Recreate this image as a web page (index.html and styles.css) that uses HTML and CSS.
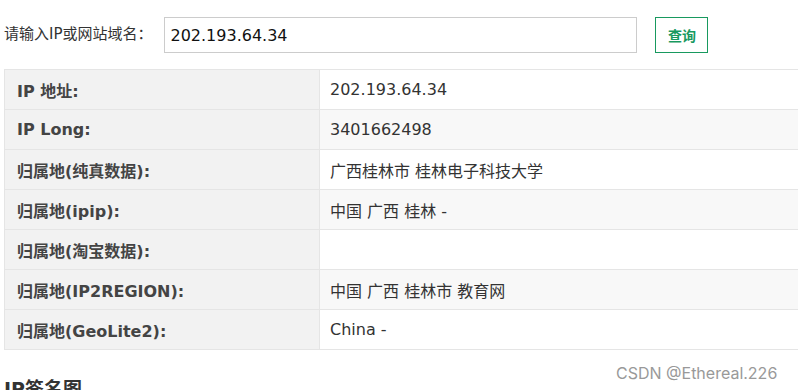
FILE: index.html
```html
<!DOCTYPE html>
<html>
  <head>
    <meta charset="utf-8" />
    <title>IP查询</title>
    <link rel="stylesheet" href="styles.css">
  </head>
  <body>
    <form class="query" onsubmit="return false">
      <label for="ip" class="query-label">请输入IP或网站域名：</label>
      <input id="ip" class="query-input" type="text" value="202.193.64.34" />
      <button class="query-btn" type="submit">查询</button>
    </form>

    <table class="info">
      <tr><th>IP 地址:</th><td>202.193.64.34</td></tr>
      <tr><th>IP Long:</th><td>3401662498</td></tr>
      <tr><th>归属地(纯真数据):</th><td>广西桂林市 桂林电子科技大学</td></tr>
      <tr><th>归属地(ipip):</th><td>中国 广西 桂林 -</td></tr>
      <tr><th>归属地(淘宝数据):</th><td></td></tr>
      <tr><th>归属地(IP2REGION):</th><td>中国 广西 桂林市 教育网</td></tr>
      <tr><th>归属地(GeoLite2):</th><td>China -</td></tr>
    </table>

    <h3 class="section-title">IP签名图</h3>

    <div class="watermark">CSDN @Ethereal.226</div>
  </body>
</html>
```

FILE: styles.css
```css
* {
    box-sizing: border-box;
}

body {
    margin: 0;
    padding: 17px 0 0 4px;
    font-family: "DejaVu Sans", "Noto Sans CJK SC", sans-serif;
    font-size: 16px;
    color: #333;
    background: #fff;
    overflow: hidden;
}

.query {
    display: flex;
    align-items: center;
    margin: 0;
}

.query-label {
    font-size: 15px;
    color: #333;
    margin-right: 12px;
    margin-top: -5px;
}

.query-input {
    width: 473px;
    height: 36px;
    padding: 0 5px;
    border: 1px solid #ccc;
    font-family: "DejaVu Sans", sans-serif;
    font-size: 16px;
    color: #111;
    outline: none;
}

.query-btn {
    width: 53px;
    height: 36px;
    margin-left: 18px;
    padding: 0;
    border: 1px solid #18995f;
    background: #fff;
    color: #18995f;
    font-family: "Noto Sans CJK SC", sans-serif;
    font-size: 14px;
    font-weight: bold;
    cursor: pointer;
}

.info {
    width: 830px;
    margin-top: 16px;
    border-collapse: collapse;
}

.info th,
.info td {
    height: 40px;
    border: 1px solid #e5e5e5;
    text-align: left;
    vertical-align: middle;
}

.info th {
    width: 315px;
    padding-left: 12px;
    background: #f2f2f2;
    color: #444;
    font-weight: bold;
    font-size: 16px;
}

.info td {
    padding-left: 10px;
    color: #333;
}

.info tr:nth-child(even) td {
    background: #f8f8f8;
}

.section-title {
    margin: 24px 0 0;
    font-size: 19px;
    font-weight: bold;
    color: #333;
}

.watermark {
    position: absolute;
    left: 616px;
    top: 363px;
    font-family: Inter, sans-serif;
    font-size: 16px;
    color: #999;
}
```
